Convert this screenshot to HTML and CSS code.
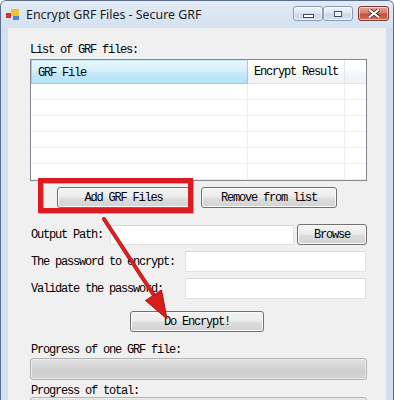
FILE: index.html
```html
<!DOCTYPE html>
<html>
<head>
<meta charset="utf-8">
<link rel="stylesheet" href="styles.css">
</head>
<body>
<div class="window">
  <div class="titlebar">
    <svg class="app-icon" viewBox="0 0 14 12" width="14" height="12">
      <rect x="0" y="4" width="5" height="5" fill="#d9302a"/>
      <rect x="5" y="0" width="8" height="7" fill="#f2c12e"/>
      <rect x="7" y="7" width="6" height="4" fill="#4a86d8"/>
    </svg>
    <span class="title">Encrypt GRF Files - Secure GRF</span>
    <div class="caption">
      <span class="cap-btn"><span class="min-glyph"></span></span>
      <span class="cap-btn max"><span class="max-glyph"></span></span>
      <span class="cap-btn close">
        <svg viewBox="0 0 12 9" width="12" height="9">
          <path d="M1.5 1 L10.5 8 M10.5 1 L1.5 8" stroke="#3a2a2a" stroke-width="3.6" stroke-linecap="square"/>
          <path d="M1.5 1 L10.5 8 M10.5 1 L1.5 8" stroke="#ffffff" stroke-width="2" stroke-linecap="square"/>
        </svg>
      </span>
    </div>
  </div>
  <div class="client">
    <div class="label">List of GRF files:</div>
    <div class="listview">
      <div class="lv-header">
        <div class="hcell col-file selected">GRF File</div>
        <div class="hcell col-result">Encrypt Result</div>
        <div class="hcell col-fill"></div>
      </div>
      <div class="lv-row"><div class="cell col-file"></div><div class="cell col-result"></div><div class="cell col-fill"></div></div>
      <div class="lv-row"><div class="cell col-file"></div><div class="cell col-result"></div><div class="cell col-fill"></div></div>
      <div class="lv-row"><div class="cell col-file"></div><div class="cell col-result"></div><div class="cell col-fill"></div></div>
      <div class="lv-row"><div class="cell col-file"></div><div class="cell col-result"></div><div class="cell col-fill"></div></div>
      <div class="lv-row"><div class="cell col-file"></div><div class="cell col-result"></div><div class="cell col-fill"></div></div>
      <div class="lv-row"><div class="cell col-file"></div><div class="cell col-result"></div><div class="cell col-fill"></div></div>
    </div>
    <div class="btn-row">
      <button class="btn btn-add">Add GRF Files</button>
      <button class="btn btn-remove">Remove from list</button>
    </div>
    <div class="form-row row-output">
      <span class="flabel lbl-output">Output Path:</span>
      <span class="textbox tb-output"></span>
      <button class="btn btn-browse">Browse</button>
    </div>
    <div class="form-row row-pass">
      <span class="flabel lbl-pass">The password to encrypt:</span>
      <span class="textbox tb-pass"></span>
    </div>
    <div class="form-row row-pass">
      <span class="flabel lbl-pass">Validate the password:</span>
      <span class="textbox tb-pass"></span>
    </div>
    <button class="btn btn-encrypt">Do Encrypt!</button>
    <div class="flabel prog-label">Progress of one GRF file:</div>
    <div class="progress"></div>
    <div class="flabel prog-label2">Progress of total:</div>
    <div class="progress progress2"></div>
  </div>
  <svg class="annotation" viewBox="0 0 394 400" width="394" height="400">
    <rect x="40.5" y="180.5" width="150" height="30" fill="none" stroke="#9a1014" stroke-width="5" opacity="0.35" transform="translate(1 1)"/>
    <rect x="40.5" y="180.5" width="150" height="30" fill="none" stroke="#dc1a20" stroke-width="5"/>
    <line x1="104" y1="219" x2="155" y2="297" stroke="#a81216" stroke-width="4" stroke-linecap="round"/>
    <line x1="104" y1="219" x2="155" y2="297" stroke="#e0221f" stroke-width="2.6" stroke-linecap="round"/>
    <polygon points="167,319 161.5,290 145.5,300.5" fill="#d81c1c" stroke="#a81216" stroke-width="1"/>
  </svg>
</div>
</body>
</html>
```

FILE: styles.css
```css
* { box-sizing: border-box; }

body {
  margin: 0;
  width: 394px;
  height: 400px;
  overflow: hidden;
  background: #ffffff;
}

.window {
  position: relative;
  width: 394px;
  height: 400px;
  border: 1px solid #5b6f8c;
  border-bottom: none;
  border-radius: 6px 6px 0 0;
  background: linear-gradient(90deg, #d3e0ef 0%, #dbe6f3 50%, #d0deee 100%);
  display: flex;
  flex-direction: column;
  overflow: hidden;
}

.titlebar {
  flex: none;
  height: 27px;
  display: flex;
  align-items: center;
  padding: 0 4px 0 5px;
  background: linear-gradient(#e2ebf6, #d4e1f0);
}

.app-icon { flex: none; margin-top: 1px; }

.title {
  margin-left: 6px;
  font-family: "Noto Sans", "Open Sans", sans-serif;
  font-size: 12.4px;
  color: #1b1b1b;
}

.caption {
  margin-left: auto;
  align-self: flex-start;
  margin-top: 5px;
  display: flex;
}

.cap-btn {
  width: 30px;
  height: 15px;
  border: 1px solid #8b9bb3;
  border-radius: 3px;
  background: linear-gradient(#eef3f9 0%, #dce6f2 48%, #c9d7e8 52%, #d6e2f0 100%);
  box-shadow: inset 0 0 0 1px rgba(255,255,255,0.55);
  display: flex;
  align-items: center;
  justify-content: center;
}

.cap-btn.close {
  margin-left: 5px;
  width: 31px;
  border-color: #7b3a35;
  background: linear-gradient(#e6a595 0%, #d6806c 45%, #c4503a 55%, #d36c52 100%);
}

.min-glyph {
  width: 11px;
  height: 4px;
  margin-top: 5px;
  background: #ffffff;
  border: 1px solid #3d4a5e;
}

.max-glyph {
  width: 8px;
  height: 6px;
  border: 1px solid #3d4a5e;
  background: #e8eef6;
  box-shadow: inset 0 0 0 1px #ffffff;
}

.client {
  flex: 1;
  margin: 0 7px;
  background: #f0f0f0;
  padding: 16px 18px 0 22px;
  display: flex;
  flex-direction: column;
  align-items: flex-start;
  font-family: "Liberation Mono", "DejaVu Sans Mono", monospace;
  font-size: 12px;
  line-height: 12px;
  letter-spacing: -1.2px;
  color: #000000;
}

.label { height: 12px; white-space: nowrap; }

.listview {
  margin-top: 3px;
  width: 337px;
  height: 122px;
  border: 1px solid #828790;
  background: #ffffff;
  display: flex;
  flex-direction: column;
  overflow: hidden;
}

.lv-header {
  display: flex;
  height: 24px;
  flex: none;
}

.hcell {
  height: 24px;
  display: flex;
  align-items: center;
  padding-left: 6px;
  padding-top: 1px;
  white-space: nowrap;
  background: linear-gradient(#ffffff 0%, #ffffff 45%, #f5f6f7 55%, #f1f2f4 100%);
  border-right: 1px solid #e3e6ea;
  border-bottom: 1px solid #e0e2e5;
}

.hcell.selected {
  background: linear-gradient(#e4f5fd 0%, #d8f0fb 45%, #c3e8f9 55%, #b7e3f7 100%);
  border: 1px solid #94cde9;
  border-top-color: #c9e8f7;
}

.col-file { width: 217px; flex: none; }
.col-result { width: 97px; flex: none; }
.col-fill { flex: 1; border-right: none; }

.lv-row {
  display: flex;
  height: 16px;
  flex: none;
}

.cell {
  height: 16px;
  border-bottom: 1px solid #eeeeee;
  border-right: 1px solid #eeeeee;
}

.cell.col-fill { border-right: none; }

.btn {
  height: 21px;
  padding: 0;
  border: 1px solid #707070;
  border-radius: 3px;
  background: linear-gradient(#f3f3f3 0%, #ececec 48%, #dedede 52%, #d2d2d2 100%);
  box-shadow: inset 0 0 0 1px #fbfbfb;
  font-family: "Liberation Mono", "DejaVu Sans Mono", monospace;
  font-size: 12px;
  letter-spacing: -1.2px;
  color: #000000;
  text-align: center;
  line-height: 12px;
}

.btn-row {
  margin-top: 6px;
  display: flex;
}

.btn-add { margin-left: 27px; width: 133px; }
.btn-remove { margin-left: 11px; width: 136px; }

.form-row {
  display: flex;
  align-items: center;
  height: 21px;
}

.row-output { margin-top: 16px; }
.row-pass { margin-top: 6px; }

.flabel {
  padding-left: 1px;
  white-space: nowrap;
}

.lbl-output { width: 80px; flex: none; }
.lbl-pass { width: 155px; flex: none; }

.textbox {
  display: block;
  height: 21px;
  background: #ffffff;
  border: 1px solid #e1e1e1;
  border-top-color: #d6d6d6;
}

.tb-output { width: 184px; height: 20px; margin-top: 1px; }
.tb-pass { width: 181px; }

.btn-browse { margin-left: 3px; width: 70px; }

.btn-encrypt {
  margin-top: 12px;
  margin-left: 100px;
  width: 134px;
}

.prog-label { margin-top: 12px; height: 12px; }
.prog-label2 { margin-top: 5px; height: 12px; }

.progress {
  margin-top: 2px;
  width: 337px;
  height: 22px;
  flex: none;
  border: 1px solid #b3b3b3;
  border-radius: 3px;
  background: linear-gradient(#e2e2e2 0%, #d6d6d6 40%, #cdcdcd 60%, #d4d4d4 100%);
  box-shadow: inset 0 0 0 1px #ececec;
}

.progress2 { margin-top: 0; }

.annotation {
  position: absolute;
  left: -1px;
  top: -1px;
  pointer-events: none;
}
```
